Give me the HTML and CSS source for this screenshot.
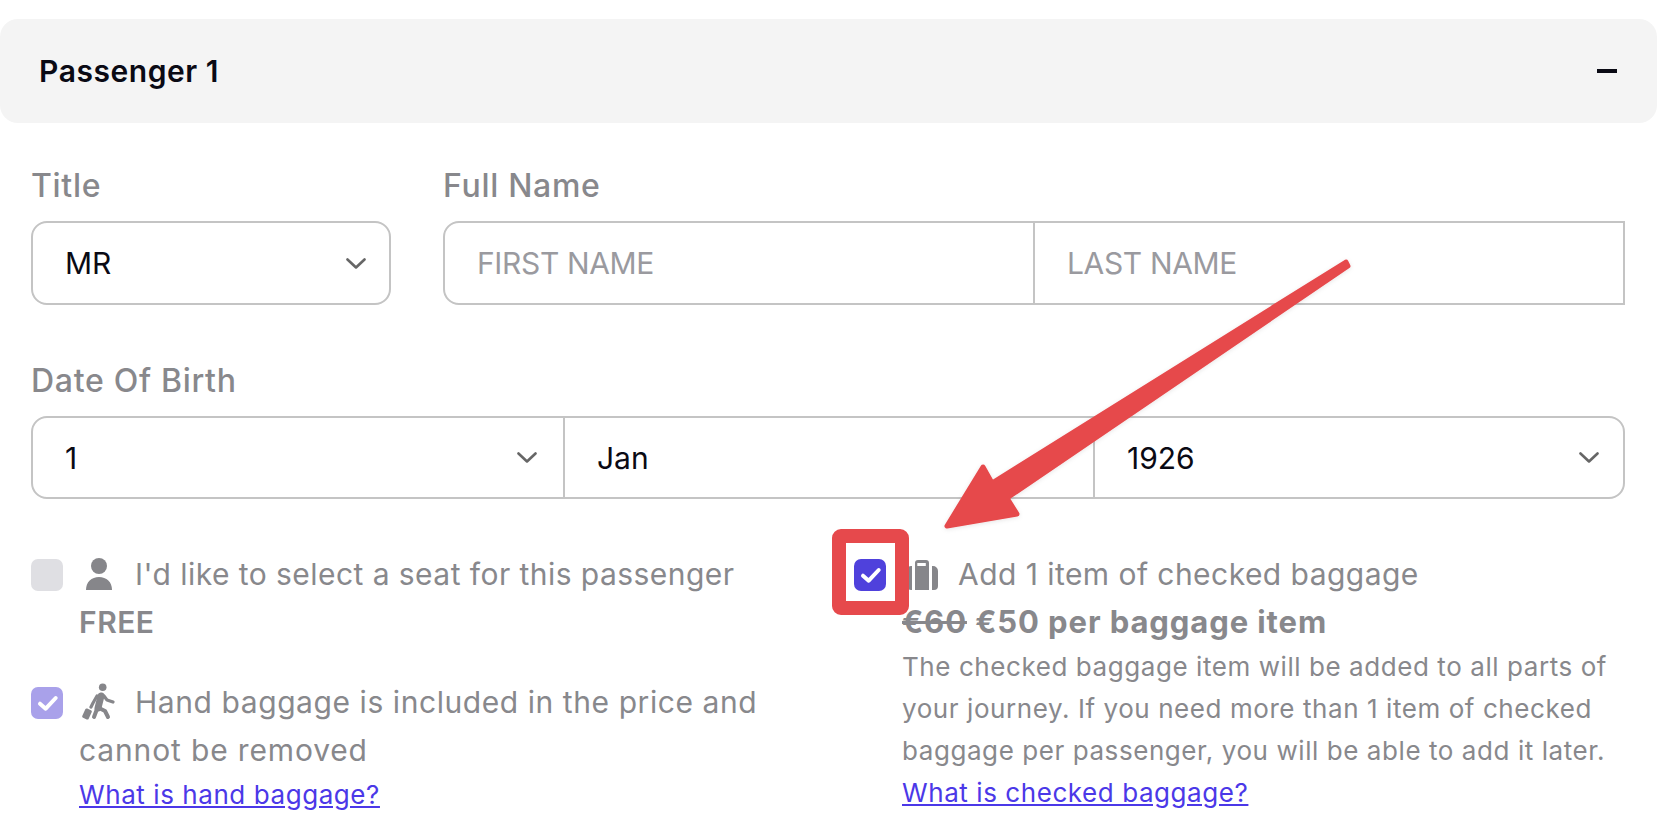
FILE: index.html
```html
<!DOCTYPE html>
<html lang="en">
<head>
<meta charset="utf-8">
<title>Passenger details</title>
<link rel="stylesheet" href="styles.css">
</head>
<body>
<main class="page">
  <header class="bar">
    <h2 class="bar-title">Passenger 1</h2>
    <span class="minus"></span>
  </header>
  <form class="form">
    <div class="row-top">
      <div class="col-title">
        <div class="label">Title</div>
        <div class="field solo">
          <span class="value">MR</span>
          <svg class="chev" viewBox="0 0 20 11"><path d="M1.5 1.5 10 9.5l8.5-8"/></svg>
        </div>
      </div>
      <div class="col-name">
        <div class="label">Full Name</div>
        <div class="field name">
          <span class="cell ph">FIRST NAME</span>
          <span class="cell ph">LAST NAME</span>
        </div>
      </div>
    </div>
    <div class="label dob-label">Date Of Birth</div>
    <div class="field dob">
      <span class="cell"><span class="value">1</span><svg class="chev" viewBox="0 0 20 11"><path d="M1.5 1.5 10 9.5l8.5-8"/></svg></span>
      <span class="cell"><span class="value">Jan</span></span>
      <span class="cell"><span class="value">1926</span><svg class="chev" viewBox="0 0 20 11"><path d="M1.5 1.5 10 9.5l8.5-8"/></svg></span>
    </div>
    <div class="options">
      <div class="opt-col">
        <div class="opt">
          <span class="check off"></span>
          <div class="opt-text">
            <svg class="ico person" viewBox="0 0 26 32"><circle cx="13" cy="8" r="8"/><path d="M0 32c0-8 5.500-13 13-13s13 5 13 13z"/></svg>I'd like to select a seat for this passenger<br>
            <b class="free">FREE</b>
          </div>
        </div>
        <div class="opt second">
          <span class="check light"><svg viewBox="0 0 32 32"><path d="M9 16.700l5.700 5L24.700 11"/></svg></span>
          <div class="opt-text hand">
            <svg class="ico walker" viewBox="0 0 33 37"><circle cx="20.700" cy="4.300" r="3.800"/><path class="w7" d="M19 13 16 25"/><path class="w3" d="M22 13l3 4 6 2M15 13l-4 7-2 4"/><path class="w4" d="M17 25l6 3 3 6M15 26l-3 8"/><rect x="1.500" y="26" width="7" height="10" rx="1.500" transform="rotate(25 5 31)"/></svg>Hand baggage is included in the price and<br><span class="tight">cannot be removed</span>
            <a class="link" href="#">What is hand baggage?</a>
          </div>
        </div>
      </div>
      <div class="opt-col right">
        <div class="opt">
          <span class="check on"><svg viewBox="0 0 32 32"><path d="M9 16.700l5.700 5L24.700 11"/></svg></span>
          <div class="opt-text">
            <svg class="ico case" viewBox="0 0 30 30"><path fill-rule="evenodd" d="M7 3a3 3 0 0 1 3-3h8a3 3 0 0 1 3 3v27H7zM9.300 3v3h8.500V3zM24 6h1a5 5 0 0 1 5 5v15a4 4 0 0 1-4 4h-2zM4 6v24H3a3 3 0 0 1-3-3V9a3 3 0 0 1 3-3z"/></svg>Add 1 item of checked baggage<br>
            <div class="price"><s>€60</s> €50 per baggage item</div>
            <p class="desc">The checked baggage item will be added to all parts of<br>your journey. If you need more than 1 item of checked<br>baggage per passenger, you will be able to add it later.</p>
            <a class="link" href="#">What is checked baggage?</a>
          </div>
        </div>
      </div>
    </div>
  </form>
</main>
<svg class="overlay" viewBox="0 0 1662 840" aria-hidden="true">
  <defs>
    <filter id="soft" x="-10%" y="-10%" width="120%" height="120%"><feDropShadow dx="0" dy="1" stdDeviation="2" flood-color="#000" flood-opacity=".1"/></filter>
  </defs>
  <rect class="red-box" x="839" y="536" width="63" height="72" rx="2"/>
  <path class="arrow" filter="url(#soft)" d="M1346 262 992 483 983 467 947 526 1017 514 1007 498 1348 266z"/>
</svg>
</body>
</html>
```
FILE: styles.css
```css
* { box-sizing: border-box; }
html, body { margin: 0; padding: 0; background: #fff; }
body { width: 1662px; height: 840px; overflow: hidden; position: relative; font-family: Inter, "Liberation Sans", sans-serif; color: #88888c; }
.page { padding-top: 19px; width: 1657px; }
.bar { height: 104px; background: #f4f4f4; border-radius: 18px; display: flex; align-items: center; justify-content: space-between; padding: 0 40px 0 39px; }
.bar-title { margin: 0; font-size: 30px; font-weight: 600; color: #0a0a14; letter-spacing: 0.55px; }
.minus { width: 20px; height: 4px; background: #0a0a14; }
.form { padding: 41px 0 0 31px; width: 1625px; }
.row-top { display: flex; gap: 52px; }
.col-title { width: 360px; flex: none; }
.col-name { flex: 1; }
.label { height: 40px; line-height: 43px; margin-bottom: 17px; font-size: 32px; font-weight: 500; letter-spacing: 0.7px; color: #88888c; }
.dob-label { margin-top: 54px; }
.field { height: 83px; border: 2px solid #c4c4c4; background: #fff; display: flex; align-items: center; font-size: 30px; color: #0a0a14; }
.solo, .name { height: 84px; }
.solo { border-radius: 16px; justify-content: space-between; padding: 0 23px 0 32px; }
.name { border-radius: 16px 0 0 16px; }
.dob { border-radius: 16px; }
.cell { height: 100%; display: flex; align-items: center; justify-content: space-between; }
.name .cell { flex: 1; padding-left: 32px; }
.name .cell + .cell { border-left: 2px solid #c4c4c4; }
.dob .cell { padding: 0 24px 0 32px; }
.dob .cell:nth-child(1) { width: 530px; padding-right: 26px; }
.dob .cell:nth-child(2) { width: 530px; border-left: 2px solid #c4c4c4; }
.dob .cell:nth-child(3) { flex: 1; border-left: 2px solid #c4c4c4; }
.ph { color: #9a9a9f; font-weight: 400; letter-spacing: -0.35px; }
.chev { width: 20px; height: 11px; fill: none; stroke: #666; stroke-width: 2.6; stroke-linecap: round; stroke-linejoin: round; }
.options { display: grid; grid-template-columns: 823px 1fr; margin-top: 51px; }
.opt { display: grid; grid-template-columns: 48px 1fr; }
.second { margin-top: 32px; }
.check { width: 32px; height: 32px; border-radius: 7px; display: block; margin-top: 9px; }
.check svg { display: block; width: 32px; height: 32px; fill: none; stroke: #fff; stroke-width: 4; stroke-linecap: round; stroke-linejoin: round; }
.off { background: #dfdfe3; }
.light { background: #a9a1ea; }
.on { background: #4f41dc; }
.opt-text { font-size: 30px; line-height: 48px; letter-spacing: 0.45px; color: #88888c; }
.hand { letter-spacing: 0.57px; }
.tight { letter-spacing: 0.85px; }
.ico { fill: #86868a; display: inline-block; vertical-align: -5px; }
.person { width: 26px; height: 32px; margin: 0 23px 0 7px; }
.walker { width: 33px; height: 37px; margin: 0 20px 0 3px; vertical-align: -7px; }
.walker path { fill: none; stroke: #86868a; stroke-linecap: round; stroke-linejoin: round; }
.w7 { stroke-width: 7; }
.w3 { stroke-width: 3.2; }
.w4 { stroke-width: 4; }
.case { width: 30px; height: 30px; margin: 0 20px 0 6px; }
.free { font-weight: 600; font-size: 30px; letter-spacing: 0.5px; }
.price { font-weight: 700; font-size: 31px; line-height: 48px; letter-spacing: 0.9px; }
.desc { margin: 0; font-size: 26px; line-height: 42px; letter-spacing: 0.57px; }
.link { display: block; font-size: 26px; line-height: 42px; letter-spacing: 0.57px; color: #4b38e8; text-decoration: underline; }
.overlay { position: absolute; left: 0; top: 0; width: 1662px; height: 840px; pointer-events: none; }
.red-box { fill: none; stroke: #e6494c; stroke-width: 14; stroke-linejoin: round; }
.arrow { fill: #e6494c; stroke: #e6494c; stroke-width: 5; stroke-linejoin: round; }
```
